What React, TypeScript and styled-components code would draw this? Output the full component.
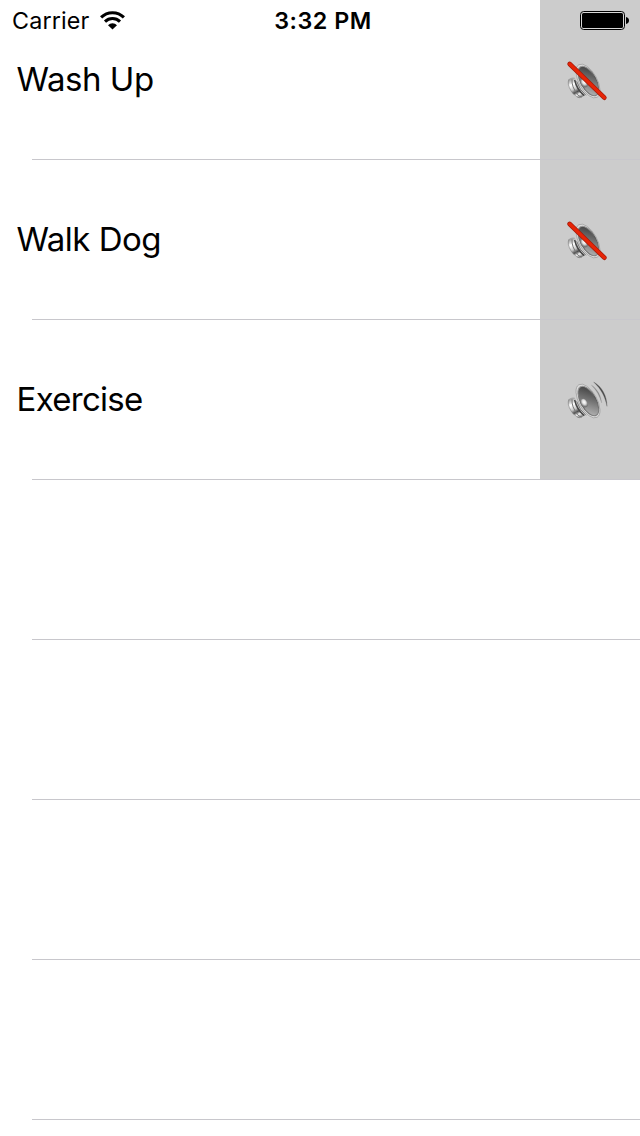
import React from "react";
import styled, { createGlobalStyle } from "styled-components";

const GlobalStyle = createGlobalStyle`
  * { box-sizing: border-box; }
  body {
    margin: 0;
    background: #fff;
    color: #000;
    font-family: Inter, "Liberation Sans", sans-serif;
    overflow: hidden;
  }
`;

const Screen = styled.main`
  position: relative;
  width: 640px;
  height: 1136px;
  overflow: hidden;
  background: #fff;
`;

const StatusBar = styled.header`
  position: absolute;
  inset: 0 0 auto 0;
  height: 40px;
  padding: 0 11px 0 12px;
  display: grid;
  grid-template-columns: 1fr auto 1fr;
  align-items: center;
`;

const CarrierGroup = styled.div`
  display: flex;
  align-items: center;
  gap: 10px;
`;

const Carrier = styled.span`
  width: 78px;
  padding-top: 2px;
  font-size: 23.3px;
  line-height: 38px;
  letter-spacing: 0.15px;
  white-space: nowrap;
`;

const Clock = styled.time`
  padding: 2px 0 0 5px;
  font-size: 23.3px;
  font-weight: 600;
  line-height: 38px;
  letter-spacing: 0.5px;
  white-space: nowrap;
`;

const BatterySlot = styled.div`
  display: flex;
  justify-content: flex-end;
`;

const List = styled.ul`
  margin: 0;
  padding: 0;
  list-style: none;
`;

const Row = styled.li`
  height: 160px;
  display: grid;
  grid-template-columns: 1fr 100px;
  grid-template-rows: 159px 1px;
`;

const Label = styled.span<{ $spacing: number }>`
  padding-left: 16.5px;
  font-size: 33px;
  line-height: 159px;
  letter-spacing: ${(p) => p.$spacing}px;
  white-space: nowrap;
`;

const SoundButton = styled.button`
  grid-column: 2;
  border: 0;
  padding: 1px 4px 0 0;
  background: #ccc;
  display: flex;
  align-items: center;
  justify-content: center;
`;

const Separator = styled.div`
  grid-column: 1 / -1;
  grid-row: 2;
  margin-left: 32px;
  background: #c8c7cc;
`;

const Wifi = () => (
  <svg width="25" height="19" viewBox="0 0 25 19" aria-hidden>
    <path d="M1.1 6.4a16.2 16.2 0 0 1 22.8 0" fill="none" stroke="#000" strokeWidth="3.1" />
    <path d="M5 10.6a10.7 10.7 0 0 1 15 0" fill="none" stroke="#000" strokeWidth="3" />
    <path d="M8 14.3a6.2 6.2 0 0 1 9 0L12.5 18.6Z" />
  </svg>
);

const Battery = () => (
  <svg width="49" height="19" viewBox="0 0 49 19" aria-hidden>
    <rect x="0.5" y="0.5" width="44" height="18" rx="3.2" fill="#d9d9d9" stroke="#000" />
    <rect x="2" y="2" width="41" height="15" rx="1.5" />
    <path d="M46 6c2 .5 3 1.8 3 3.500S48 12.500 46 13Z" />
  </svg>
);

const Speaker = ({ id, muted }: { id: string; muted: boolean }) => (
  <svg width="56" height="56" viewBox="0 0 168 168" aria-hidden>
    <defs>
      <linearGradient id={`${id}-rim`} x1="0" y1="0" x2="1" y2="0">
        <stop offset="0" stopColor="#999" />
        <stop offset="0.5" stopColor="#555" />
        <stop offset="1" stopColor="#808080" />
      </linearGradient>
      <linearGradient id={`${id}-cone`} gradientUnits="userSpaceOnUse" x1="58" y1="60" x2="112" y2="118">
        <stop offset="0" stopColor="#444" />
        <stop offset="0.45" stopColor="#747474" />
        <stop offset="1" stopColor="#b4b4b4" />
      </linearGradient>
      <linearGradient id={`${id}-base`} gradientUnits="userSpaceOnUse" x1="30" y1="84" x2="58" y2="138">
        <stop offset="0" stopColor="#a4a4a4" />
        <stop offset="0.25" stopColor="#fff" />
        <stop offset="0.5" stopColor="#c8c8c8" />
        <stop offset="0.68" stopColor="#4c4c4c" />
        <stop offset="0.82" stopColor="#f4f4f4" />
        <stop offset="1" stopColor="#777" />
      </linearGradient>
      <radialGradient id={`${id}-cap`} cx="0.4" cy="0.4">
        <stop offset="0" stopColor="#fff" />
        <stop offset="0.5" stopColor="#ddd" />
        <stop offset="1" stopColor="#777" />
      </radialGradient>
    </defs>
    <path d="M26 82Q34 74 47 78L72 129Q67 138 54 138Q35 127 27 106Q22 91 26 82Z" fill={`url(#${id}-base)`} />
    <path d="M27 82Q20 96 34 118Q45 133 58 138" fill="none" stroke="#828282" strokeWidth="2" />
    <path d="M36 82Q34 104 53 128Q58 134 65 135" fill="none" stroke="#757575" strokeWidth="3" />
    <path d="M45 72L47 94Q57 121 78 134L101 139Z" fill="#d0d0d0" />
    <path d="M44 84Q50 112 73 131" fill="none" stroke="#454545" strokeWidth="4.5" />
    <path d="M50 88Q58 114 78 130" fill="none" stroke="#777" strokeWidth="3" />
    <ellipse cx="84" cy="87" rx="56" ry="27" transform="rotate(61 84 87)" fill="#dcdcdc" stroke="#9a9a9a" strokeWidth="2" />
    <ellipse cx="85" cy="87" rx="49" ry="23" transform="rotate(61 85 87)" fill={`url(#${id}-cone)`} stroke={`url(#${id}-rim)`} strokeWidth="3" />
    <ellipse cx="72" cy="94" rx="14" ry="10" transform="rotate(60 72 94)" fill={`url(#${id}-cap)`} />
    {muted ? (
      <>
        <path d="M29 36L133 137" stroke="#a51b0b" strokeWidth="14" strokeLinecap="round" />
        <path d="M29 36L133 137" stroke="#e72406" strokeWidth="9.500" strokeLinecap="round" />
      </>
    ) : (
      <>
        <path d="M101 30C126 44 141 72 141 103C135 73 123 51 101 30Z" fill="#484848" stroke="#686868" strokeWidth="1" />
        <path d="M94 39C114 53 123 72 125 93C119 72 110 55 94 39Z" fill="#858585" stroke="#909090" strokeWidth="0.7" />
      </>
    )}
  </svg>
);

const tasks = [
  { name: "Wash Up", muted: true, spacing: -0.45 },
  { name: "Walk Dog", muted: true, spacing: -0.5 },
  { name: "Exercise", muted: false, spacing: -0.7 },
];

const emptyRows = [0, 1, 2, 3, 4];

export default function App() {
  return (
    <>
      <GlobalStyle />
      <Screen>
        <List>
          {tasks.map((task, i) => (
            <Row key={task.name}>
              <Label $spacing={task.spacing}>{task.name}</Label>
              <SoundButton aria-label={task.muted ? "Unmute" : "Mute"}>
                <Speaker id={`speaker${i}`} muted={task.muted} />
              </SoundButton>
              <Separator />
            </Row>
          ))}
          {emptyRows.map((n) => (
            <Row key={n}>
              <Separator />
            </Row>
          ))}
        </List>
        <StatusBar>
          <CarrierGroup>
            <Carrier>Carrier</Carrier>
            <Wifi />
          </CarrierGroup>
          <Clock>3:32 PM</Clock>
          <BatterySlot>
            <Battery />
          </BatterySlot>
        </StatusBar>
      </Screen>
    </>
  );
}
